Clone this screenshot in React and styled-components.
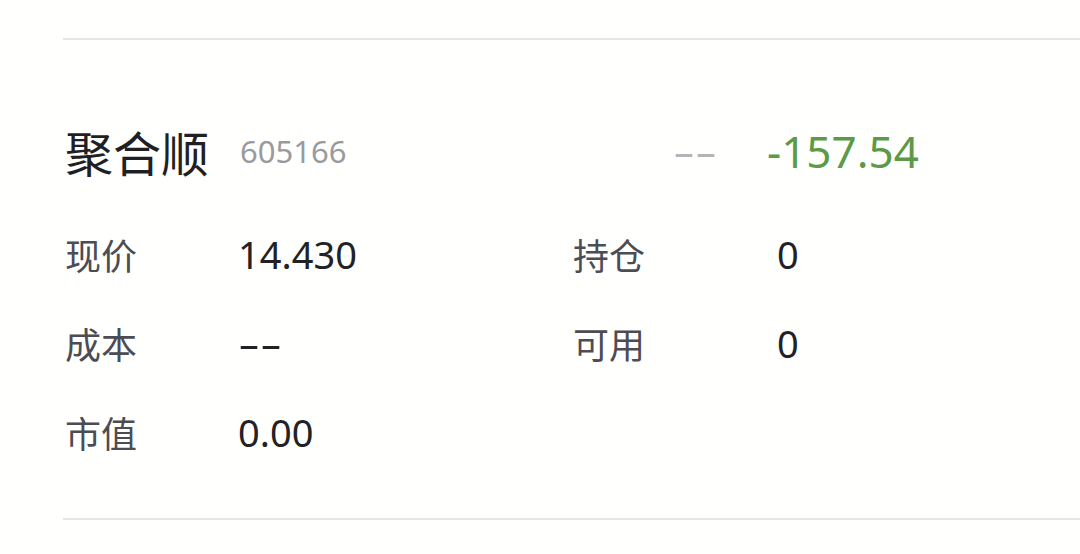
import { Fragment } from "react";
import styled, { createGlobalStyle } from "styled-components";

const GlobalStyle = createGlobalStyle`
  html, body {
    margin: 0;
    padding: 0;
    background: #fffffd;
    font-family: "Noto Sans", "Noto Sans CJK SC", sans-serif;
  }
`;

const Page = styled.div`
  width: 1080px;
  height: 554px;
  padding: 38px 0 0 63px;
  box-sizing: border-box;
  overflow: hidden;
`;

const Card = styled.div`
  border-top: 2px solid #e6e6e4;
  border-bottom: 2px solid #e6e6e4;
  height: 482px;
  box-sizing: border-box;
  padding: 54px 0 0 2px;
`;

const Header = styled.div`
  display: flex;
  align-items: center;
  height: 114px;
  margin-bottom: 1px;
`;

const Title = styled.div`
  width: 175px;
  font-size: 48px;
  color: #1f1f24;
  font-family: "Noto Sans CJK SC", sans-serif;
`;

const Code = styled.div`
  width: 433px;
  font-size: 31px;
  color: #9a9a9e;
`;

const Dash = styled.div`
  width: 94px;
  font-size: 38px;
  color: #b4b4b8;
  transform: scaleX(1.8);
  transform-origin: left center;
`;

const Profit = styled.div`
  font-size: 44px;
  color: #5c9a47;
`;

const Grid = styled.div`
  display: grid;
  grid-template-columns: 173px 335px 204px 1fr;
  grid-auto-rows: 89px;
  align-items: center;
`;

const Label = styled.div`
  font-size: 36px;
  color: #4c4c54;
  font-family: "Noto Sans CJK SC", sans-serif;
`;

const Value = styled.div`
  font-size: 38px;
  color: #222226;
  ${(p) =>
    p.$empty &&
    `
    transform: scaleX(1.8);
    transform-origin: left center;
  `}
`;

const rows = [
  ["现价", "14.430", "持仓", "0"],
  ["成本", "--", "可用", "0"],
  ["市值", "0.00", null, null],
];

export default function App() {
  return (
    <Page>
      <GlobalStyle />
      <Card>
        <Header>
          <Title>聚合顺</Title>
          <Code>605166</Code>
          <Dash>--</Dash>
          <Profit>-157.54</Profit>
        </Header>
        <Grid>
          {rows.map(([l1, v1, l2, v2]) => (
            <Fragment key={l1}>
              <Label>{l1}</Label>
              <Value $empty={v1 === "--"}>{v1}</Value>
              <Label>{l2}</Label>
              <Value>{v2}</Value>
            </Fragment>
          ))}
        </Grid>
      </Card>
    </Page>
  );
}
